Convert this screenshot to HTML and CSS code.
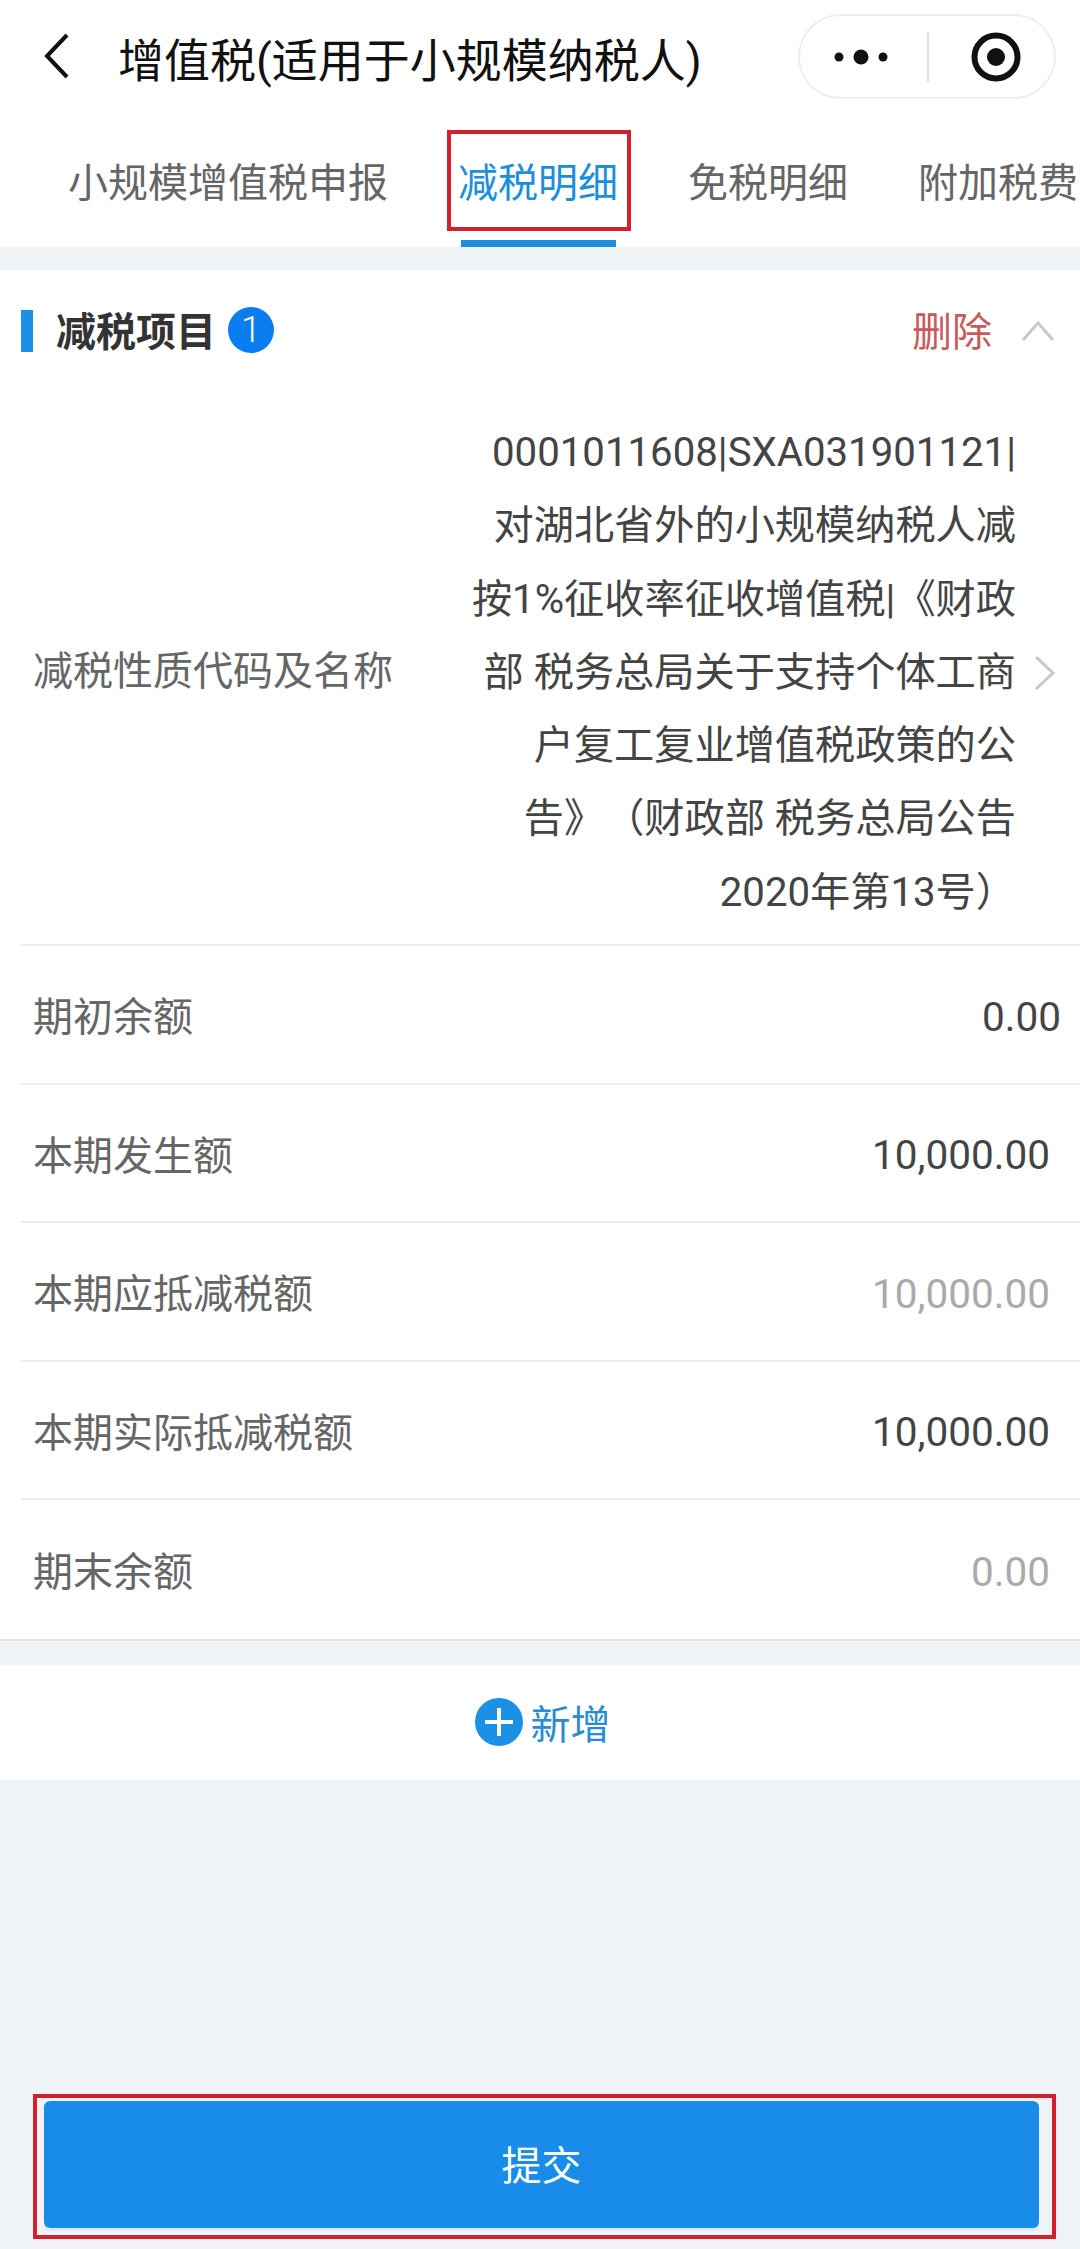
FILE: index.html
```html
<!DOCTYPE html>
<html lang="zh-CN">
<head>
    <meta charset="UTF-8">
    <meta name="viewport" content="width=device-width, initial-scale=1.0">
    <title>增值税(适用于小规模纳税人)</title>
    <link rel="stylesheet" href="styles.css">
</head>
<body>
    <div class="page">
        <header class="nav">
            <svg class="nav-back" viewBox="0 0 26 46" width="26" height="46">
                <path d="M23 2 L3 23 L23 44" fill="none" stroke="#111" stroke-width="4"/>
            </svg>
            <h1 class="nav-title">增值税(适用于小规模纳税人)</h1>
            <div class="capsule">
                <svg class="capsule-dots" viewBox="0 0 54 20" width="54" height="20">
                    <circle cx="5" cy="10" r="4.5" fill="#111"/>
                    <circle cx="27" cy="10" r="7.5" fill="#111"/>
                    <circle cx="49" cy="10" r="4.5" fill="#111"/>
                </svg>
                <span class="capsule-line"></span>
                <svg class="capsule-target" viewBox="0 0 50 50" width="50" height="50">
                    <circle cx="25" cy="25" r="21.5" fill="none" stroke="#111" stroke-width="6"/>
                    <circle cx="25" cy="25" r="9" fill="#111"/>
                </svg>
            </div>
        </header>

        <nav class="tabs">
            <div class="tab">小规模增值税申报</div>
            <div class="tab active">减税明细<span class="mark-tab"></span></div>
            <div class="tab">免税明细</div>
            <div class="tab">附加税费</div>
        </nav>

        <section class="card">
            <div class="card-head">
                <span class="head-bar"></span>
                <span class="head-title">减税项目</span>
                <span class="head-badge">1</span>
                <span class="head-delete">删除</span>
                <svg class="head-arrow" viewBox="0 0 34 22" width="34" height="22">
                    <path d="M2 20 L17 3 L32 20" fill="none" stroke="#c8c8c8" stroke-width="3"/>
                </svg>
            </div>

            <div class="row row-long">
                <div class="row-label">减税性质代码及名称</div>
                <div class="row-text">0001011608|SXA031901121|<br>对湖北省外的小规模纳税人减<br>按1%征收率征收增值税|《财政<br>部 税务总局关于支持个体工商<br>户复工复业增值税政策的公<br>告》（财政部 税务总局公告<br>2020年第13号）</div>
                <svg class="row-arrow" viewBox="0 0 22 36" width="22" height="36">
                    <path d="M2 2 L19 18 L2 34" fill="none" stroke="#c8c8c8" stroke-width="3"/>
                </svg>
            </div>
            <div class="row">
                <div class="row-label">期初余额</div>
                <div class="row-value first">0.00</div>
            </div>
            <div class="row">
                <div class="row-label">本期发生额</div>
                <div class="row-value">10,000.00</div>
            </div>
            <div class="row">
                <div class="row-label">本期应抵减税额</div>
                <div class="row-value muted">10,000.00</div>
            </div>
            <div class="row">
                <div class="row-label">本期实际抵减税额</div>
                <div class="row-value">10,000.00</div>
            </div>
            <div class="row last">
                <div class="row-label">期末余额</div>
                <div class="row-value muted">0.00</div>
            </div>
        </section>

        <div class="add">
            <span class="add-icon"></span>
            <span class="add-text">新增</span>
        </div>

        <footer class="footer">
            <div class="mark-submit">
                <button class="submit">提交</button>
            </div>
        </footer>
    </div>
</body>
</html>
```

FILE: styles.css
```css
* {
    box-sizing: border-box;
}
body {
    margin: 0;
    font-family: "Roboto", "Noto Sans CJK SC", sans-serif;
    background-color: #f0f3f6;
}
.page {
    width: 1080px;
    height: 2249px;
    display: flex;
    flex-direction: column;
    overflow: hidden;
}

/* top bar */
.nav {
    height: 113px;
    display: flex;
    align-items: center;
    background: #ffffff;
    padding: 0 24px 0 44px;
}
.nav-back {
    flex-shrink: 0;
    margin-top: -1px;
}
.nav-title {
    margin: 0 0 0 48px;
    font-size: 46px;
    font-weight: 400;
    color: #111;
    white-space: nowrap;
    flex: 1;
}
.capsule {
    width: 258px;
    height: 85px;
    display: flex;
    align-items: center;
    border: 2px solid #eeeeee;
    border-radius: 43px;
    padding-left: 34px;
}
.capsule-line {
    width: 2px;
    height: 50px;
    background: #e4e4e4;
    margin: 0 42px 0 39px;
}

/* tabs */
.tabs {
    height: 134px;
    display: flex;
    gap: 70px;
    padding-left: 68px;
    background: #ffffff;
    overflow: hidden;
}
.tab {
    position: relative;
    flex-shrink: 0;
    font-size: 40px;
    line-height: 48px;
    padding-top: 47px;
    color: #666;
    white-space: nowrap;
}
.tab.active {
    color: #1c8fdc;
}
.tab.active::after {
    content: "";
    position: absolute;
    left: 3px;
    right: 2px;
    bottom: 0;
    height: 7px;
    background: #1c8fdc;
}
.mark-tab {
    position: absolute;
    left: -11px;
    top: 17px;
    width: 184px;
    height: 101px;
    border: 4px solid #d3202f;
}

/* card */
.card {
    margin-top: 23px;
    background: #ffffff;
    border-bottom: 2px solid #e2e4e6;
}
.card-head {
    height: 122px;
    display: flex;
    align-items: center;
    padding: 0 25px 0 21px;
}
.head-bar {
    width: 12px;
    height: 42px;
    background: #1c8fe6;
}
.head-title {
    margin: 0 0 5px 23px;
    font-size: 40px;
    font-weight: 700;
    color: #333;
}
.head-badge {
    width: 46px;
    height: 46px;
    margin: 0 0 2px 12px;
    border-radius: 50%;
    background: #0a7ef0;
    color: #ffffff;
    font-size: 36px;
    font-weight: 300;
    line-height: 46px;
    text-align: center;
}
.head-delete {
    margin: 0 0 5px auto;
    font-size: 40px;
    color: #c75a5a;
}
.head-arrow {
    margin-left: 29px;
}

.row {
    height: 138.5px;
    margin-left: 21px;
    display: flex;
    align-items: center;
    justify-content: space-between;
    padding: 5px 30px 0 12px;
    border-bottom: 2px solid #ececec;
    font-size: 40px;
}
.row.last {
    border-bottom: none;
}
.row-label {
    color: #666;
    white-space: nowrap;
    margin-bottom: 5px;
}
.row-value {
    color: #444;
    font-size: 40.5px;
}
.row-value.first {
    margin-right: -11px;
}
.row-value.muted {
    color: #aaa;
}
.row-long {
    height: 554px;
    padding: 25px 24px 16px 12px;
}
.row-long .row-label {
    margin-bottom: 10px;
}
.row-text {
    margin-left: auto;
    color: #444;
    font-size: 40.2px;
    line-height: 73.3px;
    text-align: right;
    white-space: nowrap;
    text-spacing-trim: space-all;
}
.row-arrow {
    margin-left: 18px;
}

/* add button */
.add {
    height: 115px;
    margin-top: 24px;
    display: flex;
    align-items: center;
    justify-content: center;
    gap: 8px;
    padding-left: 5px;
    background: #ffffff;
}
.add-icon {
    position: relative;
    width: 48px;
    height: 48px;
    border-radius: 50%;
    background: #1c8fe6;
}
.add-icon::before {
    content: "";
    position: absolute;
    left: 10px;
    top: 22px;
    width: 28px;
    height: 4px;
    background: #ffffff;
}
.add-icon::after {
    content: "";
    position: absolute;
    left: 22px;
    top: 10px;
    width: 4px;
    height: 28px;
    background: #ffffff;
}
.add-text {
    font-size: 40px;
    color: #2a8bd6;
}

/* footer */
.footer {
    margin-top: auto;
    padding: 0 24px 10px 33px;
}
.mark-submit {
    height: 145px;
    border: 4px solid #d3202f;
    padding: 3px 13px 0 7px;
}
.submit {
    display: block;
    width: 100%;
    height: 127px;
    padding: 0 0 4px;
    border: none;
    border-radius: 6px;
    background: #188ce8;
    box-shadow: 0 3px 0 #d6ecff;
    color: #ffffff;
    font-family: inherit;
    font-size: 40px;
}
```
